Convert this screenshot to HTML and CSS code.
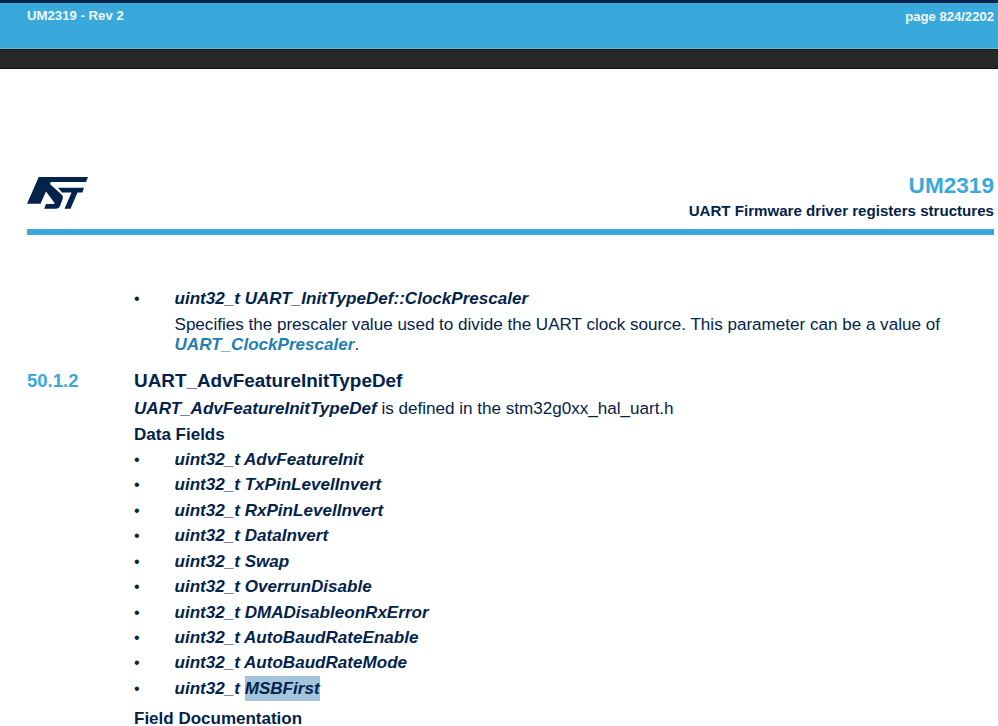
FILE: index.html
```html
<!DOCTYPE html>
<html lang="en">
<head>
<meta charset="utf-8">
<title>UM2319</title>
<link rel="stylesheet" href="styles.css">
</head>
<body>
<header class="topbar">
  <div class="band">
    <span>UM2319 - Rev 2</span>
    <span class="pageno">page 824/2202</span>
  </div>
  <div class="gap-bar"></div>
</header>
<main class="sheet">
  <div class="doc-head">
    <svg class="logo" viewBox="0 0 61 34" aria-label="ST logo">
      <path fill="#03234b" d="M11.7 0H61L59 5H25.5C23 5 22.4 6.6 24 8L34.5 17.5C36 18.8 36.2 20.5 35.5 22.5L33 29C32.2 31 31 31.7 28.8 31.7H17.2L18.9 27H26.5C27.5 27 27.8 26 27 25.2L19 14.5L13.5 26.7H0Z"/>
      <path fill="#03234b" d="M31 10.7H57L55.4 15.5H50.5L43.5 31.7H37.5L44.5 15.5H35Z"/>
    </svg>
    <div class="doc-titles">
      <div class="doc-id">UM2319</div>
      <div class="doc-section">UART Firmware driver registers structures</div>
    </div>
  </div>
  <div class="rule"></div>
  <section class="body">
    <div class="item"><span class="bullet">•</span><em>uint32_t UART_InitTypeDef::ClockPrescaler</em></div>
    <p class="desc">Specifies the prescaler value used to divide the UART clock source. This parameter can be a value of <a class="ref">UART_ClockPrescaler</a>.</p>
    <div class="heading"><span class="secno">50.1.2</span><h2>UART_AdvFeatureInitTypeDef</h2></div>
    <p class="intro"><em>UART_AdvFeatureInitTypeDef</em> is defined in the stm32g0xx_hal_uart.h</p>
    <h3>Data Fields</h3>
    <ul class="fields">
      <li class="item"><span class="bullet">•</span><em>uint32_t AdvFeatureInit</em></li>
      <li class="item"><span class="bullet">•</span><em>uint32_t TxPinLevelInvert</em></li>
      <li class="item"><span class="bullet">•</span><em>uint32_t RxPinLevelInvert</em></li>
      <li class="item"><span class="bullet">•</span><em>uint32_t DataInvert</em></li>
      <li class="item"><span class="bullet">•</span><em>uint32_t Swap</em></li>
      <li class="item"><span class="bullet">•</span><em>uint32_t OverrunDisable</em></li>
      <li class="item"><span class="bullet">•</span><em>uint32_t DMADisableonRxError</em></li>
      <li class="item"><span class="bullet">•</span><em>uint32_t AutoBaudRateEnable</em></li>
      <li class="item"><span class="bullet">•</span><em>uint32_t AutoBaudRateMode</em></li>
      <li class="item"><span class="bullet">•</span><em>uint32_t <mark>MSBFirst</mark></em></li>
    </ul>
    <h3 class="last">Field Documentation</h3>
  </section>
</main>
</body>
</html>
```
FILE: styles.css
```css
* { box-sizing: border-box; }
html, body { margin: 0; padding: 0; height: 726px; overflow: hidden; background: #fff; }
body { font-family: "Liberation Sans", Arial, sans-serif; color: #03234b; }

.topbar { height: 69px; display: flex; flex-direction: column; }
.band {
  height: 49px;
  background: #39a9dc;
  border-top: 3px solid #03234b;
  border-bottom: 1px solid #62bbe4;
  padding: 5px 4px 0 27px;
  display: flex;
  justify-content: space-between;
  color: #f2f9fd;
  font-size: 13.2px;
  font-weight: bold;
  line-height: 15px;
}
.pageno { font-size: 13.1px; margin-top: 1px; }
.gap-bar { height: 20px; background: #282828; border-top: 1px solid #111; border-bottom: 1px solid #111; }

.sheet { padding: 105px 4px 0 27px; }
.doc-head { display: flex; justify-content: space-between; align-items: flex-start; height: 55px; }
.logo { width: 61px; height: 34px; margin-top: 3px; display: block; }
.doc-titles { text-align: right; }
.doc-id { color: #39a9dc; font-size: 22.6px; font-weight: bold; line-height: 24px; }
.doc-section { font-size: 15.1px; font-weight: bold; line-height: 16px; margin-top: 5px; }
.rule { height: 6px; background: #39a9dc; }

.body { padding: 51px 24px 0 0; font-size: 17.07px; }
.item { display: flex; font-weight: bold; line-height: 25.45px; height: 25.45px; }
.item em { font-style: italic; }
.bullet { width: 40.5px; margin-left: 107px; font-style: normal; font-weight: normal; flex: none; font-size: 16px; }
.desc { margin: 3.5px 0 0 147.5px; line-height: 20px; }
.ref { color: #1e7fb0; font-weight: bold; font-style: italic; }
.heading { display: flex; align-items: baseline; margin-top: 13.5px; line-height: 25px; }
.secno { width: 107px; color: #39a9dc; font-weight: bold; font-size: 18.5px; }
h2 { margin: 0; font-size: 18.9px; font-weight: bold; }
.intro { margin: 3px 0 0 107px; line-height: 25px; }
.intro em { font-weight: bold; }
h3 { margin: 0.5px 0 0 107px; font-size: 17px; font-weight: bold; line-height: 25px; }
.fields { list-style: none; margin: 0; padding: 0; }
mark { background: #a2c4dc; color: inherit; padding: 3px 0; }
h3.last { margin-top: 11px; line-height: 14px; }
```
